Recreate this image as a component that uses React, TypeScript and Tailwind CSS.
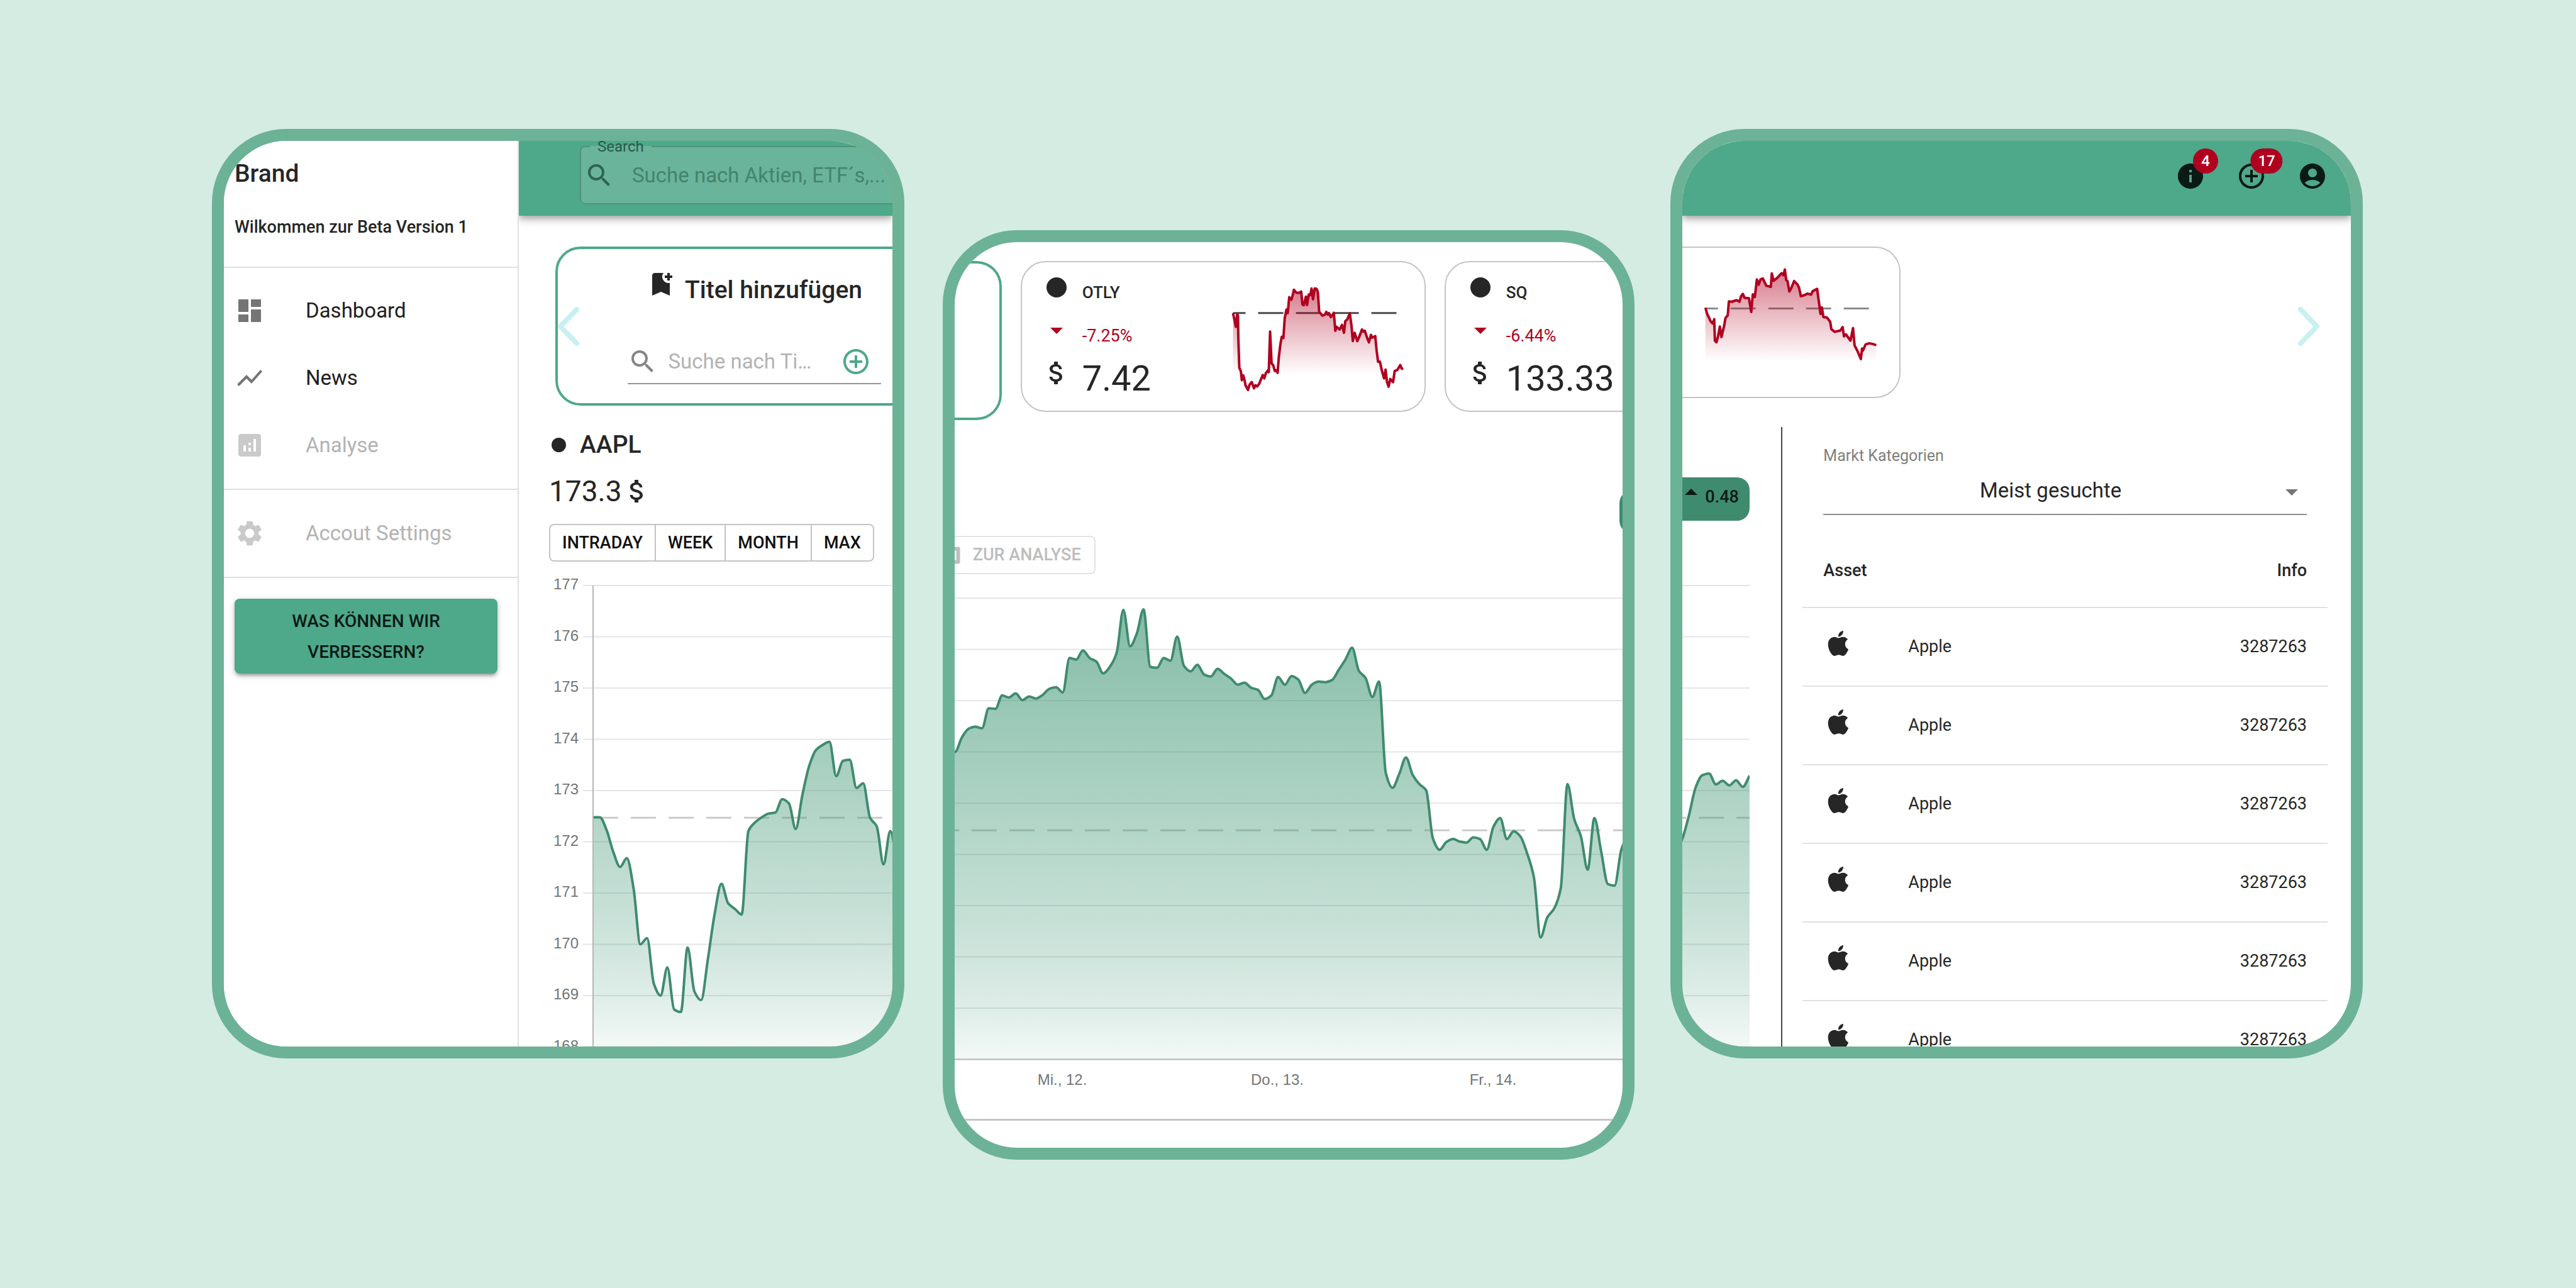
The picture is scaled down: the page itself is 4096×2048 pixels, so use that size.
import React from "react";
import {
  MdAccountCircle,
  MdAddCircleOutline,
  MdAnalytics,
  MdArrowDropDown,
  MdArrowDropUp,
  MdAttachMoney,
  MdBookmarkAdd,
  MdDashboard,
  MdInfo,
  MdSearch,
  MdSettings,
  MdShowChart,
} from "react-icons/md";

/* ---------- data ---------- */

const OPENING = [
  172.48, 172.48, 172.23, 171.8, 171.51, 171.68, 171.09, 170.0, 170.12, 169.23, 169.0, 169.55, 168.73, 168.68, 169.94,
  169.08, 168.91, 169.71, 170.59, 171.18, 170.8, 170.69, 170.58, 172.21, 172.38, 172.48, 172.55, 172.57, 172.83, 172.75,
  172.25, 172.92, 173.48, 173.79, 173.89, 173.95, 173.28, 173.58, 173.6, 173.05, 173.14, 172.47, 172.3, 171.56, 172.21,
  171.6,
];

const MIDWEEK = [
  174.4, 174.0, 174.28, 174.45, 174.49, 174.46, 174.85, 174.84, 175.1, 175.06, 175.14, 175.01, 175.08, 175.04, 175.11,
  175.23, 175.26, 175.16, 175.83, 175.8, 175.98, 175.83, 175.76, 175.53, 175.66, 175.93, 176.77, 176.06, 176.31, 176.78,
  175.66, 175.64, 175.83, 175.78, 176.25, 175.68, 175.57, 175.7, 175.51, 175.47, 175.62, 175.52, 175.43, 175.31, 175.35,
  175.25, 175.21, 175.03, 175.1, 175.46, 175.31, 175.48, 175.41, 175.15, 175.31, 175.37, 175.36, 175.4, 175.6, 175.8,
  176.03, 175.58, 175.44, 175.07, 175.37, 173.59, 173.3, 173.57, 173.89, 173.55, 173.37, 173.25, 172.31, 172.09, 172.24,
  172.3, 172.25, 172.23, 172.33, 172.3, 172.09, 172.54, 172.71, 172.3, 172.45, 172.35, 172.02, 171.56, 170.38, 170.77,
  170.94, 171.34, 173.37, 172.69, 172.35, 171.7, 172.71, 172.06, 171.42, 171.39, 172.09, 172.4,
];

const CLOSING = [171.8, 172.05, 172.51, 173.06, 173.3, 173.33, 173.12, 173.19, 173.1, 173.2, 173.07, 173.29];

const OTLY =
  "245,600 255,660 262,710 270,610 275,620 277,800 283,1040 292,1065 298,1140 306,1100 314,1135 320,1180 335,1218 345,1175 358,1155 371,1205 380,1180 390,1190 402,1170 424,1098 433,1125 442,1085 455,1060 460,1075 468,748 477,1005 487,1020 496,1065 504,1060 513,1080 520,960 530,850 538,790 548,800 556,640 566,572 574,600 583,472 596,492 603,460 611,412 625,435 640,437 655,427 662,530 670,537 683,468 690,535 700,450 710,455 717,402 726,488 736,402 747,405 755,430 763,590 783,620 797,612 806,590 815,612 822,600 833,632 851,598 860,742 868,710 886,732 900,695 912,758 920,665 932,650 947,602 957,700 965,825 976,758 992,825 1005,785 1020,732 1028,748 1037,742 1050,795 1062,835 1074,775 1082,797 1100,785 1108,900 1117,992 1128,990 1140,1065 1153,1125 1162,1055 1170,1150 1180,1192 1190,1130 1207,1155 1217,1065 1232,1058 1250,1018 1258,1045 1268,1050";

const SQ =
  "192,706 200,730 207,742 215,758 224,766 231,750 234,832 241,838 248,815 256,778 263,818 275,775 281,745 291,735 296,682 310,683 330,677 343,683 350,662 358,653 365,668 385,670 395,722 402,655 411,665 420,598 428,618 436,598 446,594 462,622 482,626 486,575 494,603 510,592 530,574 538,582 544,560 550,600 556,605 564,644 572,632 585,604 600,617 607,630 615,662 630,658 645,652 660,656 667,643 687,634 695,685 702,730 708,705 715,742 730,743 745,760 750,788 765,798 790,793 800,780 806,815 815,808 835,832 846,784 853,850 865,870 881,902 886,862 890,870 902,846 918,842 935,845 949,849";

/* ---------- charts ---------- */

// Monotone cubic interpolation, so that the curve never overshoots a sample.
function monotonePath(points: [number, number][]) {
  const n = points.length;
  const slopes = points.slice(1).map((p, i) => (p[1] - points[i][1]) / (p[0] - points[i][0]));
  const tangents = points.map((_, i) => {
    if (i === 0) return slopes[0];
    if (i === n - 1) return slopes[n - 2];
    const a = slopes[i - 1];
    const b = slopes[i];
    return a * b <= 0 ? 0 : (2 * a * b) / (a + b);
  });
  let d = `M${points[0][0]},${points[0][1]}`;
  for (let i = 0; i < n - 1; i++) {
    const [x0, y0] = points[i];
    const [x1, y1] = points[i + 1];
    const h = (x1 - x0) / 3;
    d += `C${x0 + h},${y0 + tangents[i] * h} ${x1 - h},${y1 - tangents[i + 1] * h} ${x1},${y1}`;
  }
  return d;
}

const UNIT = 81.5;

type PriceChartProps = {
  id: string;
  title: string;
  className: string;
  prices: number[];
  start: number;
  step: number;
  top: number;
  dashStart: number;
  axisX?: number;
  baseline?: boolean;
  days?: { x: number; label: string }[];
};

function PriceChart(props: PriceChartProps) {
  const { id, title, className, prices, start, step, top, dashStart, axisX, baseline, days } = props;
  const y = (price: number) => top + (177 - price) * UNIT;
  const points = prices.map((p, i): [number, number] => [start + i * step, y(p)]);
  const line = monotonePath(points);
  const bottom = y(168);
  const area = `${line}L${points[points.length - 1][0]},${bottom}L${start},${bottom}Z`;
  const ticks = [177, 176, 175, 174, 173, 172, 171, 170, 169, 168];
  return (
    <svg className={className} role="img" aria-label={title}>
      <defs>
        <linearGradient id={id} gradientUnits="userSpaceOnUse" x1="0" y1={top} x2="0" y2={bottom}>
          <stop offset="0" stopColor="#3f9675" stopOpacity="0.65" />
          <stop offset="0.67" stopColor="#3f9675" stopOpacity="0.31" />
          <stop offset="0.78" stopColor="#3f9675" stopOpacity="0.25" />
          <stop offset="0.89" stopColor="#3f9675" stopOpacity="0.17" />
          <stop offset="1" stopColor="#3f9675" stopOpacity="0.06" />
        </linearGradient>
      </defs>
      {ticks.map((t) => (
        <line key={t} x1={axisX ? axisX - 16 : 0} x2="100%" y1={y(t)} y2={y(t)} stroke="#e5e5e5" strokeWidth="2" />
      ))}
      {axisX &&
        ticks.map((t) => (
          <text
            key={t}
            x={axisX - 23}
            y={y(t) + 6}
            textAnchor="end"
            className="fill-[#757575] font-[family-name:Liberation_Sans,sans-serif] text-[24px]"
          >
            {t}
          </text>
        ))}
      <line
        x1={dashStart}
        x2="100%"
        y1={y(172.47)}
        y2={y(172.47)}
        stroke="#cbcbcb"
        strokeWidth="3"
        strokeDasharray="40 20"
      />
      <path d={area} fill={`url(#${id})`} />
      <path d={line} fill="none" stroke="#3f8b70" strokeWidth="4" strokeLinejoin="round" />
      {axisX && <line x1={axisX} x2={axisX} y1={top} y2="100%" stroke="#b5b5b5" strokeWidth="2" />}
      {baseline && <line x1="0" x2="100%" y1={bottom} y2={bottom} stroke="#b8b8b8" strokeWidth="2" />}
      {days?.map((d) => (
        <text
          key={d.label}
          x={d.x}
          y={bottom + 40}
          textAnchor="middle"
          className="fill-[#757575] font-[family-name:Liberation_Sans,sans-serif] text-[24px]"
        >
          {d.label}
        </text>
      ))}
    </svg>
  );
}

type SparklineProps = {
  id: string;
  className: string;
  points: string;
  box: [number, number, number, number];
  reference: number;
  fadeFrom: number;
  fadeTo: number;
  dashColor: string;
};

function Sparkline({ id, className, points, box, reference, fadeFrom, fadeTo, dashColor }: SparklineProps) {
  const xs = points.split(" ").map((p) => Number(p.split(",")[0]));
  const first = xs[0];
  const last = xs[xs.length - 1];
  return (
    <svg
      viewBox={box.join(" ")}
      preserveAspectRatio="none"
      className={`shrink-0 overflow-visible ${className}`}
      aria-hidden="true"
    >
      <defs>
        <linearGradient id={id} gradientUnits="userSpaceOnUse" x1="0" y1={fadeFrom} x2="0" y2={fadeTo}>
          <stop offset="0" stopColor="#b00020" stopOpacity="0.55" />
          <stop offset="1" stopColor="#b00020" stopOpacity="0" />
        </linearGradient>
      </defs>
      <line
        x1={first}
        x2={last}
        y1={reference}
        y2={reference}
        stroke={dashColor}
        strokeWidth="3"
        strokeDasharray="40 20"
        strokeDashoffset="20"
        vectorEffect="non-scaling-stroke"
      />
      <polygon points={`${first},${fadeTo} ${points} ${last},${fadeTo}`} fill={`url(#${id})`} />
      <polyline
        points={points}
        fill="none"
        stroke="#b00020"
        strokeWidth="4"
        strokeLinejoin="round"
        vectorEffect="non-scaling-stroke"
      />
    </svg>
  );
}

/* ---------- shared parts ---------- */

function Phone({ className, children }: { className: string; children: React.ReactNode }) {
  return (
    <section
      className={`aspect-[1101/1478] min-w-0 flex-1 overflow-hidden rounded-[118px] border-[19px] border-[#6cb297] bg-white ${className}`}
    >
      {children}
    </section>
  );
}

function Chevron({ direction }: { direction: "left" | "right" }) {
  return (
    <svg
      viewBox="0 0 34 62"
      className="h-[62px] w-[34px]"
      fill="none"
      stroke="#c9f0f0"
      strokeWidth="8"
      strokeLinecap="round"
      strokeLinejoin="round"
    >
      <path d={direction === "left" ? "M30 4L4 31L30 58" : "M4 4L30 31L4 58"} />
    </svg>
  );
}

function AppleIcon() {
  return (
    <svg viewBox="0 0 24 24" className="inline size-12 align-baseline" fill="currentColor" aria-hidden="true">
      <path d="M18.71 19.5C17.88 20.74 17 21.95 15.66 21.97C14.32 22 13.89 21.18 12.37 21.18C10.84 21.18 10.37 21.95 9.1 22C7.79 22.05 6.8 20.68 5.96 19.47C4.25 17 2.94 12.45 4.7 9.39C5.57 7.87 7.13 6.91 8.82 6.88C10.1 6.86 11.32 7.75 12.11 7.75C12.89 7.75 14.37 6.68 15.92 6.84C16.57 6.87 18.39 7.1 19.56 8.82C19.47 8.88 17.39 10.1 17.41 12.63C17.44 15.65 20.06 16.66 20.09 16.67C20.06 16.74 19.67 18.11 18.71 19.5M13 3.5C13.73 2.67 14.94 2.04 15.94 2C16.07 3.17 15.6 4.35 14.9 5.19C14.21 6.04 13.07 6.7 11.95 6.61C11.8 5.46 12.36 4.26 13 3.5Z" />
    </svg>
  );
}

function NavItem({ icon, label, disabled }: { icon: React.ReactNode; label: string; disabled?: boolean }) {
  return (
    <a
      href="#"
      aria-disabled={disabled}
      className={`flex h-[107px] items-center gap-[65px] pl-[17px] text-[33px] ${disabled ? "text-[#b3b3b3]" : "text-[#212121]"}`}
    >
      <span className={disabled ? "text-[#cacaca]" : "text-[#757575]"}>{icon}</span>
      {label}
    </a>
  );
}

function StockCard({
  name,
  change,
  price,
  children,
}: {
  name: string;
  change: string;
  price: string;
  children?: React.ReactNode;
}) {
  return (
    <article className="flex h-[240px] w-[644px] shrink-0 items-start rounded-[40px] border-2 border-[#c4c4c4] pt-4 pr-[33px] pl-[31px]">
      <div className="grid auto-rows-[68px] grid-cols-[48px_auto] items-start gap-x-[17px] leading-[66px]">
        <span className="grid size-12 place-items-center">
          <span className="size-8 rounded-full bg-[#262626]" />
        </span>
        <h3 className="text-[26px] leading-[64px] font-medium">{name}</h3>
        <MdArrowDropDown className="size-12 text-[#b00020]" />
        <p className="text-[27px] text-[#b00020]">{change}</p>
        <MdAttachMoney className="size-12" />
        <p className="text-[56px]">{price}</p>
      </div>
      <div className="ml-auto pt-5">{children}</div>
    </article>
  );
}

const BAR_SHADOW =
  "shadow-[0_4px_8px_-2px_rgba(0,0,0,0.2),0_8px_10px_0_rgba(0,0,0,0.14),0_2px_20px_0_rgba(0,0,0,0.12)]";

/* ---------- phones ---------- */

function DashboardPhone() {
  return (
    <Phone className="flex items-stretch">
      <aside className="relative z-10 flex w-[469px] shrink-0 flex-col border-r-2 border-[#e0e0e0] bg-white">
        <h1 className="flex h-[104px] items-center pl-[17px] text-[39px] font-medium">Brand</h1>
        <div className="border-b-2 border-[#e0e0e0] pb-[30px]">
          <p className="flex h-[66px] items-center pl-[17px] text-[27px] font-medium">Wilkommen zur Beta Version 1</p>
        </div>
        <nav>
          <div className="border-b-2 border-[#e0e0e0] pt-[14px] pb-4">
            <NavItem icon={<MdDashboard className="size-12" />} label="Dashboard" />
            <NavItem icon={<MdShowChart className="size-12" />} label="News" />
            <NavItem icon={<MdAnalytics className="size-12" />} label="Analyse" disabled />
          </div>
          <div className="border-b-2 border-[#e0e0e0] pt-[15px] pb-4">
            <NavItem icon={<MdSettings className="size-12" />} label="Accout Settings" disabled />
          </div>
        </nav>
        <button
          type="button"
          className="mt-[33px] mr-8 ml-[17px] h-[119px] rounded-lg bg-[#4ea88a] px-16 text-[28px] leading-[49px] font-medium text-[#0b1a15] shadow-[0_6px_4px_-4px_rgba(0,0,0,0.2),0_4px_6px_0_rgba(0,0,0,0.18),0_2px_12px_0_rgba(0,0,0,0.14)]"
        >
          WAS KÖNNEN WIR VERBESSERN?
        </button>
      </aside>

      <main className="min-w-0 flex-1 overflow-hidden">
        <header className={`relative flex h-[119px] bg-[#4ea88a] pl-[97px] ${BAR_SHADOW}`}>
          <fieldset className="h-[101px] w-[620px] shrink-0 rounded-lg border-2 border-[#4f937b] bg-[#69b49b]">
            <legend className="ml-[14px] px-3 text-[24px] leading-[18px] text-[#27594a]">
              <label htmlFor="search">Search</label>
            </legend>
            <div className="flex h-[74px] items-center gap-7 pl-[5px]">
              <MdSearch className="size-12 shrink-0 text-[#2f6351]" />
              <input
                id="search"
                placeholder="Suche nach Aktien, ETF´s,..."
                className="min-w-0 flex-1 bg-transparent text-[33px] outline-none placeholder:text-[#45836d] placeholder:opacity-100"
              />
            </div>
          </fieldset>
        </header>

        <section className="relative mt-[49px] ml-[58px] flex h-[253px] w-[632px] flex-col items-center rounded-[40px] border-4 border-[#4ea88a] pt-8">
          <h2 className="flex items-start gap-[14px] text-[39px] leading-[66px] font-medium">
            <MdBookmarkAdd className="size-12" />
            Titel hinzufügen
          </h2>
          <div className="mt-[46px] flex h-[71px] w-[403px] items-center border-b-2 border-[#949494] pr-4">
            <MdSearch className="mr-[17px] size-12 shrink-0 text-[#858585]" />
            <input
              aria-label="Titel suchen"
              placeholder="Suche nach Ti…"
              className="min-w-0 flex-1 bg-transparent text-[33px] outline-none placeholder:text-[#b3b3b3] placeholder:opacity-100"
            />
            <button type="button" aria-label="Titel hinzufügen">
              <MdAddCircleOutline className="size-12 text-[#4ea88a]" />
            </button>
          </div>
          <button type="button" aria-label="Zurück" className="absolute top-1/2 left-0 -translate-y-1/2">
            <Chevron direction="left" />
          </button>
        </section>

        <div className="mt-8 ml-12 flex flex-col items-start">
          <h2 className="flex h-[60px] items-center gap-[22px] pl-1 text-[39px] font-medium">
            <span className="size-[23px] rounded-full bg-[#262626]" />
            AAPL
          </h2>
          <p className="mt-[14px] flex h-[60px] items-center text-[46px]">
            173.3
            <MdAttachMoney className="size-12" />
          </p>
          <div
            role="group"
            aria-label="Zeitraum"
            className="mt-[22px] flex h-[60px] divide-x-2 divide-[#c4c4c4] rounded-lg border-2 border-[#c4c4c4] text-[27px] font-medium text-[#111]"
          >
            <button type="button" className="px-[19px]">INTRADAY</button>
            <button type="button" className="px-[19px]">WEEK</button>
            <button type="button" className="px-[19px]">MONTH</button>
            <button type="button" className="px-[19px]">MAX</button>
          </div>
        </div>

        <PriceChart
          id="fill-opening"
          title="AAPL"
          className="mt-[15px] h-[780px] w-full"
          prices={OPENING}
          start={118}
          step={10.74}
          top={23}
          dashStart={118}
          axisX={118}
        />
      </main>
    </Phone>
  );
}

function ChartPhone() {
  return (
    <Phone className="mt-[161px]">
      <div className="flex items-start gap-[30px] overflow-hidden pt-[30px]">
        <div className="h-[253px] w-[75px] shrink-0 rounded-r-[40px] border-4 border-l-0 border-[#4ea88a]" />
        <StockCard name="OTLY" change="-7.25%" price="7.42">
          <Sparkline
            id="fade-otly"
            className="h-[170px] w-[272px]"
            points={OTLY}
            box={[243, 373, 1028, 860]}
            reference={600}
            fadeFrom={350}
            fadeTo={1095}
            dashColor="#4a4a4a"
          />
        </StockCard>
        <StockCard name="SQ" change="-6.44%" price="133.33" />
      </div>

      <div className="mt-[112px] flex h-[68px] overflow-hidden">
        <div className="ml-[1057px] w-[106px] shrink-0 rounded-[20px] bg-[#3f8b70]" />
      </div>

      <button
        type="button"
        disabled
        className="mt-1 -ml-[43px] flex h-[61px] items-center gap-4 rounded-lg border-2 border-[#e3e3e3] pr-[21px] pl-[18px] text-[27px] font-medium text-[#bdbdbd]"
      >
        <MdAnalytics className="size-9" />
        ZUR ANALYSE
      </button>

      <PriceChart
        id="fill-midweek"
        title="AAPL Wochenverlauf"
        className="h-[820px] w-full"
        prices={MIDWEEK}
        start={-10}
        step={10.7}
        top={38}
        dashStart={-33}
        baseline
        days={[
          { x: 171, label: "Mi., 12." },
          { x: 513, label: "Do., 13." },
          { x: 856, label: "Fr., 14." },
        ]}
      />
      <hr className="mt-[46px] border-t-[3px] border-[#c6c6c6]" />
    </Phone>
  );
}

function MarketPhone() {
  return (
    <Phone className="ml-[57px] flex flex-col">
      <header
        className={`relative flex h-[119px] shrink-0 items-center justify-end gap-[49px] bg-[#4ea88a] pr-[37px] pb-2 text-[#0a1a14] ${BAR_SHADOW}`}
      >
        <button type="button" aria-label="Info" className="relative">
          <MdInfo className="size-12" />
          <span className="absolute top-0 left-full flex h-10 min-w-10 -translate-1/2 items-center justify-center rounded-full bg-[#b00020] px-3 text-[24px] font-medium text-white">
            4
          </span>
        </button>
        <button type="button" aria-label="Neu" className="relative">
          <MdAddCircleOutline className="size-12" />
          <span className="absolute top-0 left-full flex h-10 min-w-10 -translate-1/2 items-center justify-center rounded-full bg-[#b00020] px-3 text-[24px] font-medium text-white">
            17
          </span>
        </button>
        <button type="button" aria-label="Konto">
          <MdAccountCircle className="size-12" />
        </button>
      </header>

      <div className="mt-[49px] flex h-[253px] shrink-0 items-start justify-between pr-[50px]">
        <article className="h-[241px] w-[347px] rounded-r-[40px] border-2 border-l-0 border-[#c4c4c4] pt-[30px] pl-9">
          <Sparkline
            id="fade-sq"
            className="h-[156px] w-[272px]"
            points={SQ}
            box={[190, 549, 758, 375]}
            reference={709}
            fadeFrom={540}
            fadeTo={912}
            dashColor="#8c8c8c"
          />
        </article>
        <button type="button" aria-label="Weiter" className="self-center">
          <Chevron direction="right" />
        </button>
      </div>

      <div className="mt-[34px] flex min-h-0 flex-1">
        <div className="w-[157px] shrink-0 overflow-hidden pt-20">
          <div className="flex h-[69px] w-[107px] items-start rounded-r-[20px] bg-[#3f8b70] text-[27px] leading-[62px] font-medium text-[#0b1a15]">
            <MdArrowDropUp className="-mr-0.5 -ml-[10px] size-12 shrink-0" />
            0.48
          </div>
          <PriceChart
            id="fill-closing"
            title="AAPL Tagesende"
            className="mt-20 h-[780px] w-[107px]"
            prices={CLOSING}
            start={-11}
            step={10.72}
            top={23}
            dashStart={-34}
          />
        </div>

        <div className="min-w-0 flex-1 overflow-hidden border-l-2 border-[#444] pr-[37px] pl-8">
          <div className="mx-[33px] pt-[29px]">
            <label htmlFor="category" className="block text-[25px] leading-[34px] text-[#808080]">
              Markt Kategorien
            </label>
            <div className="relative">
              <select
                id="category"
                className="h-[77px] w-full appearance-none border-b-2 border-[#8f8f8f] bg-transparent pr-[46px] text-center text-[33px] outline-none"
              >
                <option>Meist gesuchte</option>
              </select>
              <MdArrowDropDown className="pointer-events-none absolute top-4 right-0 size-12 text-[#757575]" />
            </div>
          </div>

          <table className="mt-[31px] w-full border-separate border-spacing-0 text-[27px]">
            <thead>
              <tr className="h-[117px]">
                <th colSpan={2} className="border-b-2 border-[#e0e0e0] pl-[33px] text-left font-medium">
                  Asset
                </th>
                <th className="border-b-2 border-[#e0e0e0] pr-[33px] text-right font-medium">Info</th>
              </tr>
            </thead>
            <tbody>
              {[0, 1, 2, 3, 4, 5].map((row) => (
                <tr key={row} className="h-[125px]">
                  <td className="w-[168px] border-b-2 border-[#e0e0e0] pl-[33px] leading-10">
                    <AppleIcon />
                  </td>
                  <td className="border-b-2 border-[#e0e0e0]">Apple</td>
                  <td className="border-b-2 border-[#e0e0e0] pr-[33px] text-right">3287263</td>
                </tr>
              ))}
            </tbody>
          </table>
        </div>
      </div>
    </Phone>
  );
}

export default function App() {
  return (
    <div className="flex min-h-screen items-start bg-[#d5ece3] pt-[205px] pr-[339px] pl-[337px] font-[family-name:Roboto,sans-serif] text-[#262626]">
      <DashboardPhone />
      <div className="w-[61px] shrink-0" />
      <ChartPhone />
      <MarketPhone />
    </div>
  );
}
